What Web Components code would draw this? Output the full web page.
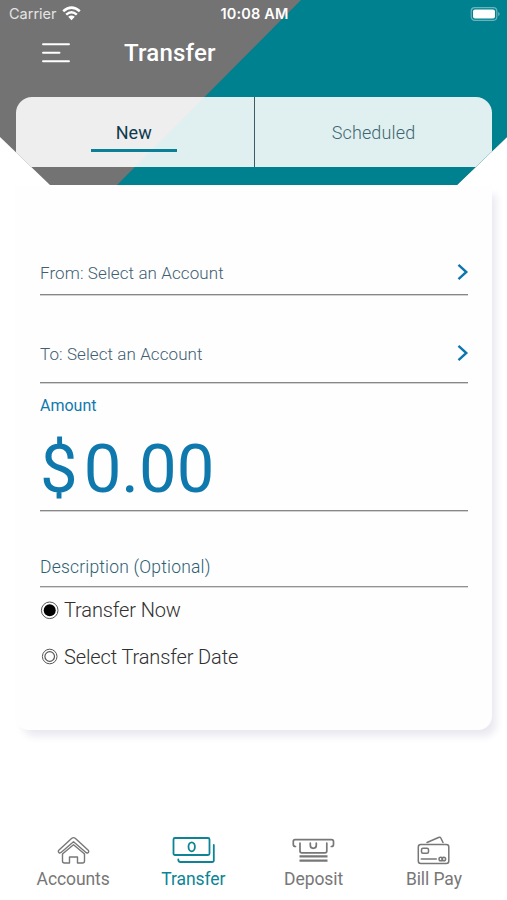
<!DOCTYPE html>
<html lang="en">
<head>
<meta charset="utf-8">
<title>Transfer</title>
<style>
html,body{margin:0;height:100%}
body{font-family:Roboto,"Liberation Sans",sans-serif;background:#fff;overflow:hidden}
</style>
</head>
<body>
<transfer-app></transfer-app>
<script>
const define = (name, render) => customElements.define(name, class extends HTMLElement {
  connectedCallback() {
    if (this.shadowRoot) return;
    this.attachShadow({ mode: 'open' }).innerHTML = render(this);
  }
});

define('status-bar', () => `
<style>
:host{display:grid;grid-template-columns:1fr auto 1fr;align-items:center;height:28px;padding:0 7px 0 9px;color:#fff;font:14.500px/28px Inter,sans-serif}
.l{display:flex;align-items:center;gap:6px;color:#e4e4e4}
.t{font-weight:600;font-size:14.500px;letter-spacing:.15px}
.r{justify-self:end;display:flex}
svg{display:block}
.l svg{margin:-2px 0 0 -1px}
.r svg{margin-top:-1px}
</style>
<div class="l"><span>Carrier</span><svg width="19" height="15" viewBox="0 0 19 15" fill="none" stroke="#fff" stroke-width="2.5"><path d="M1.2 5.3Q9.5-2 17.8 5.3M4.2 8.6Q9.5 4 14.8 8.6"/><path d="M6.2 10.8Q9.5 8.3 12.8 10.8L9.5 14.2Z" fill="#fff" stroke="none"/></svg></div>
<div class="t">10:08 AM</div>
<div class="r"><svg width="30" height="14" viewBox="0 0 30 14"><rect x="1.200" y=".7" width="25.6" height="12.6" rx="3.5" fill="none" stroke="#6ab4bd" stroke-width="1.2"/><rect x="3" y="2.5" width="22" height="9" rx="2" fill="#fff"/><path d="M28.200 5v4q1.500-.7 1.500-2t-1.500-2" fill="#6ab4bd"/></svg></div>`);

define('title-bar', () => `
<style>
:host{display:flex;align-items:center;height:50px;padding-left:42px;gap:54px;color:#fff}
svg{display:block;margin-top:-1px}
h1{margin:0;font-size:24px;font-weight:500;line-height:30px;letter-spacing:.2px}
</style>
<svg width="28" height="20" viewBox="0 0 28 20" stroke="#fff" stroke-width="1.9" stroke-linecap="round"><path d="M1 1.200h26M1 9.800h16.500M1 18.300h26"/></svg>
<h1><slot></slot></h1>`);

define('tab-item', el => `
<style>
:host{flex:1;display:flex;flex-direction:column;align-items:center;box-sizing:border-box;padding-top:24px;color:#3f6670;font-size:18px;font-weight:300;line-height:24px;letter-spacing:.15px}
:host([active]){color:#0e3a4e;font-weight:400;border-right:1px solid #3d5c62;letter-spacing:0;padding-right:2px}
i{display:block;width:86px;height:2.500px;margin-top:4px;background:#0b7f96}
:host(:not([active])) i{visibility:hidden}
</style>
<span><slot></slot></span><i></i>`);

define('app-header', () => `
<style>
:host{display:block;height:185px;background:#737373;clip-path:polygon(0 0,507px 0,507px 137px,457px 185px,50px 185px,0 137px)}
.cut{display:grid}
.cut>*{grid-area:1/1}
.tabs{display:grid;grid-template-columns:239.500px 1fr;margin:19px 15px 0 15.500px;height:69.500px;border-radius:16px 16px 0 0;background:#f4f4f8e0;background:#ffffffe0;overflow:hidden}
svg{display:block}
</style>
<div class="cut"><svg width="507" height="185"><path fill="#00818f" d="M301 0H507V185H117Z"/></svg>
<div><status-bar></status-bar><title-bar>Transfer</title-bar>
<div class="tabs"><tab-item active>New</tab-item><tab-item>Scheduled</tab-item></div></div></div>`);

define('select-row', () => `
<style>
:host{display:flex;justify-content:space-between;align-items:center;box-sizing:border-box;border-bottom:1px solid #878787;box-shadow:0 1px #d2d2d2;color:#3f6073;font-size:17px;font-weight:300;line-height:24px}
svg{display:block;margin:-1px -1px 0 0}
span{letter-spacing:var(--ls,0)}
</style>
<span><slot></slot></span><svg width="12" height="18" viewBox="0 0 12 18" fill="none" stroke="#0d76ae" stroke-width="2.400"><path d="M1.500 1.800 9.300 9 1.500 16.200"/></svg>`);

define('amount-field', () => `
<style>
:host{display:block;height:128px;box-sizing:border-box;border-bottom:1px solid #878787;box-shadow:0 1px #d2d2d2;color:#0f79ae;padding-top:12px}
label{display:block;font-size:16px;line-height:22px}
.v{display:flex;gap:6px;font-size:67px;line-height:80px;margin-top:12px}
</style>
<label>Amount</label><div class="v"><span>$</span><span>0.00</span></div>`);

define('text-row', () => `
<style>
:host{display:block;border-bottom:1px solid #929292;box-shadow:0 1px #d8d8d8;box-sizing:border-box;height:76px;padding-top:44px;color:#2c6072;font-size:17.500px;font-weight:300;line-height:24px;letter-spacing:.19px}
</style>
<slot></slot>`);

define('radio-row', el => `
<style>
:host{display:flex;align-items:center;gap:5px;height:46.500px;color:#303030;font-size:20px;font-weight:300;letter-spacing:-.12px}
svg{display:block}
</style>
<svg width="19" height="19" viewBox="0 0 19 19" fill="none" stroke="#555">${el.hasAttribute('checked')
 ? '<circle cx="9.700" cy="9.300" r="8.300"/><circle cx="9.700" cy="9.300" r="6" fill="#000" stroke="none"/>'
 : '<circle cx="9.700" cy="9.500" r="7.300"/><circle cx="9.700" cy="9.500" r="4.800" stroke-width="1.200"/>'}</svg><span><slot></slot></span>`);

define('transfer-card', () => `
<style>
:host{display:block;box-sizing:border-box;height:545px;margin:0 15px;padding:60px 24.500px 0 25px;border-radius:0 0 14px 14px;background:#fefefe;box-shadow:6px 8px 8px -2px #e8e8f0}
.a{height:50px;padding-top:6px}
.b{height:88px;padding-top:30px}
</style>
<select-row class="a" style="--ls:.1px">From: Select an Account</select-row>
<select-row class="b" style="--ls:.08px">To: Select an Account</select-row>
<amount-field></amount-field>
<text-row>Description (Optional)</text-row>
<radio-row checked>Transfer Now</radio-row>
<radio-row>Select Transfer Date</radio-row>`);

const icons = {
  home: '<g stroke-width="1.400"><path d="M5.500 18v7q0 2 2 2h5v-6h8v6h5q2 0 2-2v-7"/><path d="M1.500 14.500 14.800 2.300q1.700-1.300 3.400 0L31.500 14.500q.8 1.500-.5 2.300-1.200.6-2.300-.5L16.500 5.800 4.300 16.300Q3 17.400 2 16.600q-1.200-.9-.5-2.100Z" /><path d="M6 17.500 16.500 8.800 27 17.500"/></g>',
  cash: '<g stroke-width="1.800"><rect x="-3.500" y="2" width="36" height="17" rx="1.500"/><ellipse cx="14.700" cy="10.800" rx="3.200" ry="4.500"/><path d="M36.800 9v15.500q0 1.500-1.800 1.500H3.500q-2.200 0-2.200-2.500"/></g>',
  deposit: '<g stroke-width="1.700"><path d="M-1.500 10.500q-2.200 0-2.200-2V5.500q0-1.800 1.700-1.800H34.500q2 0 2 1.800v3q0 2-2.200 2M3 7v8q0 1.800 1.800 1.800H28q1.800 0 1.800-1.800V7M13.300 7v2.300q0 3 3 3t3-3V7"/></g><path d="M2.500 20.300h28M2.500 24.700h28" stroke-width="2.300" stroke-linecap="butt"/>',
  card: '<g stroke-width="1.500"><rect x="1.300" y="8.500" width="30.500" height="19" rx="2.500"/><path d="M10 6.500 21.500 1.500q1.700-.7 2.300.5L26 6.500"/><rect x="4.500" y="12.300" width="7" height="5" rx="1.500" stroke-width="1.500"/><path d="M4.300 23h15"/><circle cx="23.800" cy="23" r="1.800"/><circle cx="26.800" cy="23" r="1.800"/></g>'
};
define('nav-item', el => `
<style>
:host{flex:1;display:flex;flex-direction:column;align-items:center;color:#777}
:host([active]){color:#0c8496}
svg{display:block;overflow:visible}
span{font-size:17.500px;line-height:24px;margin-top:2px;letter-spacing:-.08px}
</style>
<svg width="33" height="29" viewBox="0 0 33 29" fill="none" stroke="currentColor" stroke-linecap="round" stroke-linejoin="round">${icons[el.getAttribute('icon')]}</svg><span><slot></slot></span>`);

define('bottom-nav', () => `
<style>:host{display:flex;margin:auto 13px 7px;height:57px}</style>
<nav-item icon="home">Accounts</nav-item><nav-item icon="cash" active>Transfer</nav-item><nav-item icon="deposit">Deposit</nav-item><nav-item icon="card">Bill Pay</nav-item>`);

define('transfer-app', () => `
<style>:host{display:flex;flex-direction:column;width:507px;height:900px}</style>
<app-header></app-header><transfer-card></transfer-card><bottom-nav></bottom-nav>`);
</script>
</body>
</html>
